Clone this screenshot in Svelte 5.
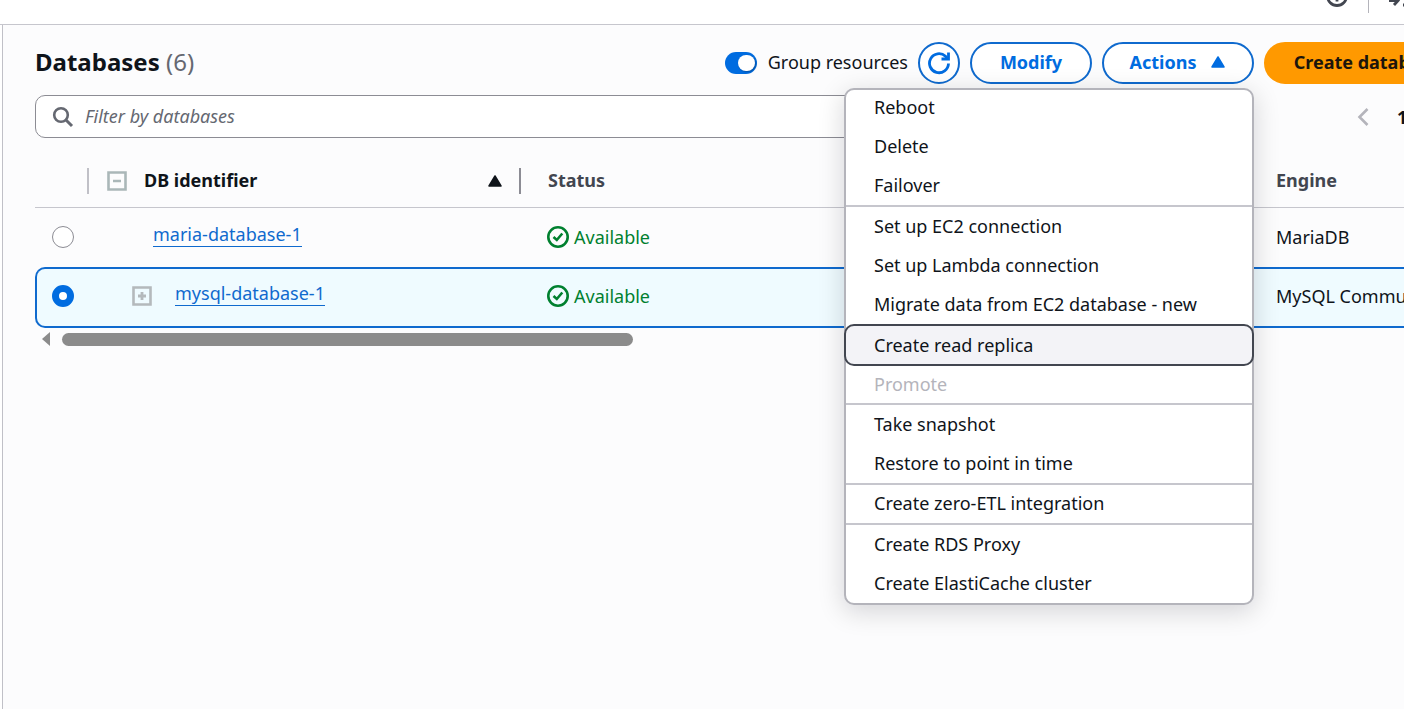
<script lang="ts">
  const groups = [
    ['Reboot', 'Delete', 'Failover'],
    ['Set up EC2 connection', 'Set up Lambda connection', 'Migrate data from EC2 database - new'],
    ['Create read replica', 'Promote'],
    ['Take snapshot', 'Restore to point in time'],
    ['Create zero-ETL integration'],
    ['Create RDS Proxy', 'Create ElastiCache cluster'],
  ];
  const active = 'Create read replica';
  const disabled = ['Promote'];

  const rows = [
    { id: 'maria-database-1', engine: 'MariaDB', expandable: false },
    { id: 'mysql-database-1', engine: 'MySQL Community', expandable: true },
  ];
  let selected = $state('mysql-database-1');
  let grouped = $state(true);
</script>

<div class="page">
  <div class="topbar">
    <svg width="22" height="12" viewBox="0 0 22 12" aria-hidden="true">
      <circle cx="11" cy="-4" r="9.5" fill="none" stroke="#424650" stroke-width="2.8" />
      <path d="M11 -4V1.5" stroke="#424650" stroke-width="2.8" />
    </svg>
    <span class="rule"></span>
    <svg width="22" height="12" viewBox="0 0 22 12" aria-hidden="true">
      <path d="M0 0.500H10M5 5L10 -0.500M14 5H22" fill="none" stroke="#424650" stroke-width="2.8" />
    </svg>
  </div>

  <main>
    <div class="panel">
      <header>
        <h1>Databases <span>(6)</span></h1>
        <label class="toggle">
          <input type="checkbox" bind:checked={grouped} />
          <span>Group resources</span>
        </label>
        <div class="buttons">
          <button class="refresh" aria-label="Refresh">
            <svg width="24" height="24" viewBox="0 0 24 24" aria-hidden="true">
              <path d="M21.500 12.500A9.500 9.500 0 1 1 18.500 5.300L21 8" fill="none" stroke="currentColor" stroke-width="2.800" />
              <path d="M21.500 1.500V8H14.500" fill="none" stroke="currentColor" stroke-width="2.800" />
            </svg>
          </button>
          <button class="modify">Modify</button>
          <div class="dropdown">
            <button class="actions" aria-expanded="true">
              Actions
              <svg width="16" height="14" viewBox="0 0 16 14" aria-hidden="true">
                <path d="M8 2L14 12H2Z" fill="currentColor" stroke="currentColor" stroke-width="1.500" stroke-linejoin="round" />
              </svg>
            </button>
            <div class="menu" role="menu">
              {#each groups as group}
                <div class="group" class:lit={group.includes(active)}>
                  {#each group as item}
                    <button role="menuitem" class:active={item === active} disabled={disabled.includes(item)}>{item}</button>
                  {/each}
                </div>
              {/each}
            </div>
          </div>
          <button class="create">Create database</button>
        </div>
      </header>

      <div class="tools">
        <label class="search">
          <svg width="22" height="22" viewBox="0 0 22 22" aria-hidden="true">
            <circle cx="9" cy="9" r="6.800" fill="none" stroke="#656871" stroke-width="2.600" />
            <path d="M14 14L20 20" stroke="#656871" stroke-width="3" />
          </svg>
          <input type="text" placeholder="Filter by databases" aria-label="Filter by databases" />
        </label>
        <nav aria-label="Pagination">
          <button aria-label="Previous page">
            <svg width="12" height="20" viewBox="0 0 12 20" aria-hidden="true">
              <path d="M10.500 2L2.500 10L10.500 18" fill="none" stroke="#b4b4bb" stroke-width="2.600" />
            </svg>
          </button>
          <button class="current">1</button>
        </nav>
      </div>

      <table>
        <colgroup>
          <col class="c-radio" /><col class="c-id" /><col class="c-status" /><col />
        </colgroup>
        <thead>
          <tr>
            <td></td>
            <th class="first">
              <div class="idhead">
                <svg width="20" height="20" viewBox="0 0 20 20" aria-hidden="true">
                  <path d="M1.500 1.500H18.500V18.500H1.500Z M6 10H14" fill="none" stroke="#aab7b8" stroke-width="2.600" />
                </svg>
                <span>DB identifier</span>
                <svg width="16" height="14" viewBox="0 0 16 14" aria-hidden="true">
                  <path d="M8 2L14 12H2Z" fill="#0f141a" stroke="#0f141a" stroke-width="1.500" stroke-linejoin="round" />
                </svg>
              </div>
            </th>
            <th class="second"><div>Status</div></th>
            <th><div>Engine</div></th>
          </tr>
        </thead>
        <tbody>
          {#each rows as row}
            <tr class:selected={selected === row.id}>
              <td class="pick"><input type="radio" name="db" value={row.id} bind:group={selected} aria-label={row.id} /></td>
              <td>
                <div class="name" class:nested={row.expandable}>
                  {#if row.expandable}
                    <svg width="20" height="20" viewBox="0 0 20 20" aria-hidden="true">
                      <path d="M1.500 1.500H18.500V18.500H1.500Z" fill="none" stroke="#b4b9bc" stroke-width="2.600" />
                      <path d="M6 10H14M10 6V14" stroke="#b4b9bc" stroke-width="2.800" />
                    </svg>
                  {/if}
                  <a href="#{row.id}">{row.id}</a>
                </div>
              </td>
              <td>
                <div class="status">
                  <svg width="22" height="22" viewBox="0 0 22 22" aria-hidden="true">
                    <circle cx="11" cy="11" r="9.700" fill="none" stroke="currentColor" stroke-width="2.600" />
                    <path d="M6.500 11L9.800 14L15.300 7.500" fill="none" stroke="currentColor" stroke-width="2.600" />
                  </svg>
                  Available
                </div>
              </td>
              <td><div>{row.engine}</div></td>
            </tr>
          {/each}
        </tbody>
      </table>

      <div class="scroll">
        <svg width="8" height="14" viewBox="0 0 8 14" aria-hidden="true"><path d="M8 0V14L0 7Z" fill="#8b8b8b" /></svg>
        <div class="thumb"></div>
      </div>
    </div>
  </main>
</div>

<style>
  :global(body) {
    margin: 0;
    background: #fcfcfd;
  }
  .page {
    display: flex;
    flex-direction: column;
    min-height: 100vh;
    overflow: hidden;
    background: #fff;
    color: #0f141a;
    font: 18px/24px 'Noto Sans', 'Open Sans', sans-serif;
  }
  .page * {
    box-sizing: border-box;
  }
  button,
  input {
    font: inherit;
    color: inherit;
    margin: 0;
  }
  svg {
    flex: none;
    display: block;
  }
  .topbar {
    display: flex;
    justify-content: flex-end;
    gap: 20px;
    height: 25px;
    margin-right: -7px;
    border-bottom: 1px solid #c6c6cd;
  }
  .rule {
    width: 1px;
    height: 13px;
    background: #b4b4bb;
  }
  main {
    flex: 1;
    margin-left: 2px;
    border-left: 1px solid #c0c0c7;
    background: #fcfcfd;
  }
  .panel {
    margin-right: -66px;
    padding: 17px 0 0 32px;
  }
  header {
    display: flex;
    align-items: center;
  }
  h1 {
    flex: 1;
    margin: 0;
    padding-bottom: 2px;
    font-size: 24px;
    line-height: 32px;
    font-weight: 700;
  }
  h1 span {
    font-weight: 400;
    color: #656871;
  }
  .toggle {
    display: flex;
    align-items: center;
    gap: 11px;
    margin-right: 10px;
  }
  .toggle span {
    padding-bottom: 2px;
  }
  .toggle input {
    appearance: none;
    display: flex;
    justify-content: flex-end;
    width: 32px;
    height: 22px;
    padding: 3px 2px;
    border-radius: 11px;
    background: #006ce0;
  }
  .toggle input::before {
    content: '';
    width: 17px;
    height: 16px;
    border-radius: 8px;
    background: #fff;
    box-shadow: 1px 1px 2px #0004;
  }
  .toggle input:not(:checked) {
    justify-content: flex-start;
    background: #8c8c94;
  }
  .buttons {
    display: flex;
    gap: 10px;
  }
  .buttons > button,
  .actions {
    height: 42px;
    padding: 0 0 2px;
    border: 2px solid #0f6ace;
    border-radius: 21px;
    background: #fff;
    color: #006ce0;
    font-weight: 700;
  }
  .buttons > .refresh {
    display: grid;
    place-items: center;
    width: 42px;
    padding: 0;
  }
  .buttons > .modify {
    width: 122px;
  }
  .actions {
    display: flex;
    align-items: center;
    justify-content: center;
    gap: 14px;
    width: 152px;
  }
  .buttons > .create {
    width: 206px;
    border-color: #ff9900;
    background: #ff9900;
    color: #1c150c;
  }
  .dropdown {
    position: relative;
  }
  .menu {
    position: absolute;
    z-index: 2;
    top: 46px;
    right: 0;
    width: 410px;
    border: 2px solid #b4b4bb;
    border-radius: 10px;
    background: #fff;
    box-shadow: 0 6px 26px 1px #00071628;
  }
  .group + .group:not(.lit) {
    border-top: 2px solid #c6c6cd;
  }
  .menu button {
    display: block;
    width: 100%;
    height: 39px;
    padding: 0 28px 2px;
    border: 0;
    background: none;
    text-align: left;
  }
  .group:first-child {
    margin-top: -2px;
  }
  .menu button:disabled {
    color: #b4b4bb;
    height: 37px;
  }
  .menu button:only-child {
    height: 38px;
  }
  .menu .active {
    width: calc(100% + 4px);
    height: 42px;
    margin: 0 -2px;
    padding-bottom: 0;
    border: 2px solid #424650;
    border-radius: 10px;
    background: #f3f3f7;
  }
  .tools {
    display: flex;
    align-items: center;
    margin-top: 11px;
  }
  .search {
    flex: 1;
    display: flex;
    align-items: center;
    gap: 11px;
    height: 43px;
    padding: 0 16px;
    border: 1px solid #8c8c94;
    border-radius: 10px;
    background: #fff;
  }
  .search input {
    flex: 1;
    min-width: 0;
    padding: 0 0 2px;
    border: 0;
    outline: 0;
    background: none;
  }
  .search input::placeholder {
    color: #656871;
    font-style: italic;
    opacity: 1;
  }
  nav {
    display: flex;
    align-items: center;
    gap: 28px;
    width: 113px;
    margin-left: 120px;
  }
  nav button {
    padding: 0;
    border: 0;
    background: none;
  }
  .current {
    font-weight: 700;
  }
  table {
    width: 100%;
    margin-top: 17px;
    table-layout: fixed;
    border-collapse: separate;
    border-spacing: 0;
  }
  .c-radio {
    width: 52px;
  }
  .c-id {
    width: 432px;
  }
  .c-status {
    width: 729px;
  }
  td,
  th {
    height: 59px;
    padding: 0 0 2px 28px;
    text-align: left;
  }
  thead td,
  thead th {
    height: 53px;
    border-bottom: 1px solid #c6c6cd;
    font-weight: 700;
    color: #424650;
  }
  th.first,
  th.second {
    padding: 0;
  }
  th.first > div,
  th.second > div {
    height: 26px;
    border-left: 2px solid #c0c0c7;
  }
  th.second > div {
    padding-left: 27px;
    border-color: #8c8c94;
  }
  .idhead {
    display: flex;
    align-items: center;
    padding: 0 16px 0 18px;
    gap: 17px;
    color: #0f141a;
  }
  .idhead span {
    flex: 1;
    padding-bottom: 2px;
  }
  td.pick {
    padding: 0 0 2px 17px;
  }
  .pick input {
    appearance: none;
    display: block;
    width: 22px;
    height: 22px;
    border: 1px solid #8c8c94;
    border-radius: 50%;
    background: #fff;
  }
  .pick input:checked {
    border: 7px solid #006ce0;
  }
  .name {
    display: flex;
    align-items: center;
    gap: 23px;
    padding-left: 38px;
  }
  .name.nested {
    padding-left: 17px;
  }
  a {
    color: #0f6ace;
    line-height: 22px;
    padding-bottom: 1px;
    margin-bottom: 4px;
    border-bottom: 1px solid #0f6ace;
    text-decoration: none;
  }
  .status {
    display: flex;
    align-items: center;
    gap: 5px;
    color: #00802f;
  }
  .selected td {
    height: 61px;
    padding-bottom: 4px;
    border: 2px solid #0f6ace;
    border-width: 2px 0;
    background: #effbff;
  }
  .selected td:first-child {
    padding: 0 0 4px 15px;
    border-left-width: 2px;
    border-radius: 10px 0 0 10px;
  }
  .scroll {
    display: flex;
    align-items: center;
    gap: 12px;
    height: 14px;
    margin-top: 4px;
    padding-left: 7px;
  }
  .thumb {
    width: 40%;
    height: 13px;
    border-radius: 7px;
    background: #8b8b8b;
  }
</style>
